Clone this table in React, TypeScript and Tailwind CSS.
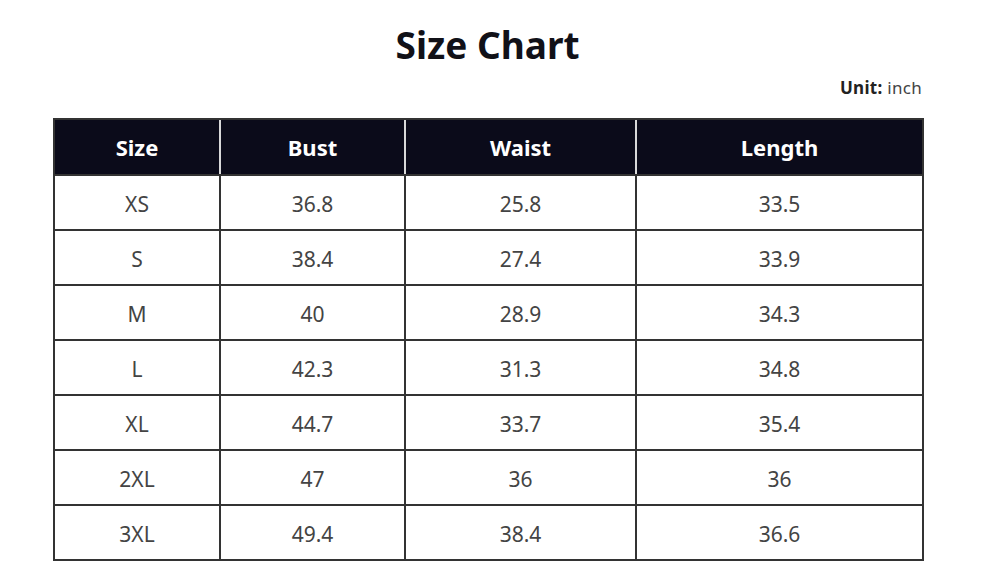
import React from "react";

const rows = [
  ["XS", "36.8", "25.8", "33.5"],
  ["S", "38.4", "27.4", "33.9"],
  ["M", "40", "28.9", "34.3"],
  ["L", "42.3", "31.3", "34.8"],
  ["XL", "44.7", "33.7", "35.4"],
  ["2XL", "47", "36", "36"],
  ["3XL", "49.4", "38.4", "36.6"],
];

export default function App() {
  return (
    <div
      className="w-[1003px] h-[570px] bg-white overflow-hidden"
      style={{ fontFamily: '"Noto Sans", "Open Sans", sans-serif' }}
    >
      <div className="ml-[53px] w-[869px] pt-[20px]">
        <h1 className="text-center text-[37px] leading-[50px] font-bold text-[#111118]">Size Chart</h1>
        <div className="text-right text-[17px] tracking-[0.3px] leading-[22px] mt-[7px] text-[#444]">
          <span className="font-bold text-[#222]">Unit:</span> inch
        </div>
        <table className="mt-[19px] w-[869px] border-collapse table-fixed">
          <colgroup>
            <col className="w-[166px]" />
            <col className="w-[185px]" />
            <col className="w-[231px]" />
            <col className="w-[287px]" />
          </colgroup>
          <thead>
            <tr className="h-[56px] bg-[#0b0b1a] text-white">
              {["Size", "Bust", "Waist", "Length"].map((h, i) => (
                <th
                  key={h}
                  className={`text-[22px] font-bold text-center border-y-2 border-[#333] ${
                    i === 0 ? "border-l-2" : "border-l-2 border-l-[#d9d9d9]"
                  } ${i === 3 ? "border-r-2" : ""}`}
                >
                  {h}
                </th>
              ))}
            </tr>
          </thead>
          <tbody>
            {rows.map((r) => (
              <tr key={r[0]} className="h-[55px]">
                {r.map((c, i) => (
                  <td
                    key={i}
                    className="text-[21px] pt-[5px] text-center text-[#444] border-2 border-[#333]"
                  >
                    {c}
                  </td>
                ))}
              </tr>
            ))}
          </tbody>
        </table>
      </div>
    </div>
  );
}
